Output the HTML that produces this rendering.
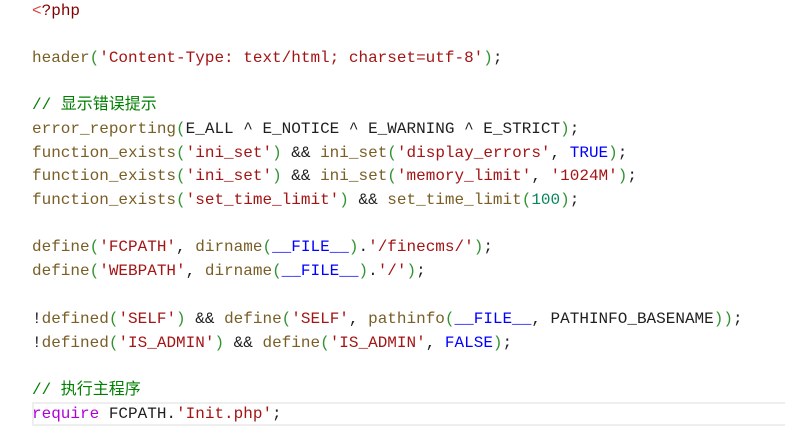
<!DOCTYPE html>
<html><head><meta charset="utf-8"><style>
html,body{margin:0;padding:0;background:#fff;width:785px;height:441px;overflow:hidden}
.c{position:absolute;left:32px;top:2px;font-family:"Liberation Mono","Noto Sans CJK SC",monospace;font-size:16px;white-space:pre;color:#1f1f1f}
.l{position:absolute;left:0;height:23.6px;line-height:23.6px}
.f{color:#795e26}.s{color:#a31515}.p{color:#319331}.k{color:#0000ff}.n{color:#098658}.cm{color:#008000}.r{color:#af00db}.t{color:#800000}
.hl{position:absolute;left:32px;right:0;top:402px;height:20px;border:2px solid #eeeeee;border-right:none}
</style></head><body>
<div class="hl"></div>
<div class="c">
<div class="l" style="top:-2px"><span class="t" style="color:#e04040">&lt;</span><span class="t">?php</span></div>
<div class="l" style="top:45px"><span class="f">header</span><span class="p">(</span><span class="s">'Content-Type: text/html; charset=utf-8'</span><span class="p">)</span>;</div>
<div class="l" style="top:92px"><span class="cm">// 显示错误提示</span></div>
<div class="l" style="top:116px"><span class="f">error_reporting</span><span class="p">(</span>E_ALL ^ E_NOTICE ^ E_WARNING ^ E_STRICT<span class="p">)</span>;</div>
<div class="l" style="top:139.5px"><span class="f">function_exists</span><span class="p">(</span><span class="s">'ini_set'</span><span class="p">)</span> &amp;&amp; <span class="f">ini_set</span><span class="p">(</span><span class="s">'display_errors'</span>, <span class="k">TRUE</span><span class="p">)</span>;</div>
<div class="l" style="top:163px"><span class="f">function_exists</span><span class="p">(</span><span class="s">'ini_set'</span><span class="p">)</span> &amp;&amp; <span class="f">ini_set</span><span class="p">(</span><span class="s">'memory_limit'</span>, <span class="s">'1024M'</span><span class="p">)</span>;</div>
<div class="l" style="top:187px"><span class="f">function_exists</span><span class="p">(</span><span class="s">'set_time_limit'</span><span class="p">)</span> &amp;&amp; <span class="f">set_time_limit</span><span class="p">(</span><span class="n">100</span><span class="p">)</span>;</div>
<div class="l" style="top:234px"><span class="f">define</span><span class="p">(</span><span class="s">'FCPATH'</span>, <span class="f">dirname</span><span class="p">(</span><span class="k">__FILE__</span><span class="p">)</span>.<span class="s">'/finecms/'</span><span class="p">)</span>;</div>
<div class="l" style="top:258px"><span class="f">define</span><span class="p">(</span><span class="s">'WEBPATH'</span>, <span class="f">dirname</span><span class="p">(</span><span class="k">__FILE__</span><span class="p">)</span>.<span class="s">'/'</span><span class="p">)</span>;</div>
<div class="l" style="top:306px">!<span class="f">defined</span><span class="p">(</span><span class="s">'SELF'</span><span class="p">)</span> &amp;&amp; <span class="f">define</span><span class="p">(</span><span class="s">'SELF'</span>, <span class="f">pathinfo</span><span class="p">(</span><span class="k">__FILE__</span>, PATHINFO_BASENAME<span class="p">))</span>;</div>
<div class="l" style="top:330px">!<span class="f">defined</span><span class="p">(</span><span class="s">'IS_ADMIN'</span><span class="p">)</span> &amp;&amp; <span class="f">define</span><span class="p">(</span><span class="s">'IS_ADMIN'</span>, <span class="k">FALSE</span><span class="p">)</span>;</div>
<div class="l" style="top:377px"><span class="cm">// 执行主程序</span></div>
<div class="l" style="top:401px"><span class="r">require</span> FCPATH.<span class="s">'Init.php'</span>;</div>
</div>
</body></html>
